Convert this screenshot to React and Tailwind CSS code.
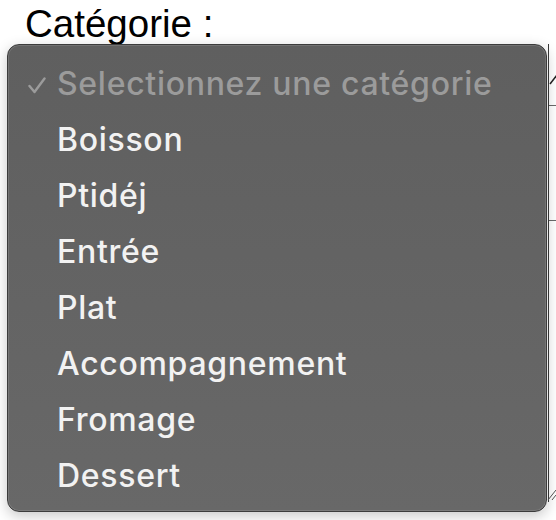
import React from "react";

const items = ["Boisson", "Ptidéj", "Entrée", "Plat", "Accompagnement", "Fromage", "Dessert"];

export default function App() {
  return (
    <div className="relative w-[556px] h-[520px] bg-white overflow-hidden">
      <div className="pl-[25px] pt-[5px] text-[38.5px] leading-[38px] text-black" style={{ fontFamily: '"Liberation Sans", Arial, sans-serif' }}>
        Catégorie :
      </div>

      {/* underlying form fragments visible at right edge */}
      <div className="absolute left-[548px] top-[44px] w-[10px] h-[458px] border-l border-[#3a3a3a] bg-white">
        <div className="h-[62px] border-b border-[#6a6a6a] relative">
          <svg className="absolute left-0 top-[28px]" width="8" height="14" viewBox="0 0 8 14">
            <path d="M1 12 L8 3" stroke="#222" strokeWidth="1.5" fill="none" />
          </svg>
        </div>
        <div className="h-[115px] border-b border-[#6a6a6a]" />
      </div>
      <svg className="absolute left-[546px] top-[486px]" width="10" height="16" viewBox="0 0 10 16">
        <path d="M2 14 L10 4" stroke="#555" strokeWidth="1" fill="none" />
        <path d="M6 14 L10 9" stroke="#555" strokeWidth="1" fill="none" />
      </svg>

      {/* dropdown menu */}
      <div
        className="absolute left-[7px] top-[44px] w-[540px] h-[468px] rounded-[12px] border border-[#3c3c3c] bg-gradient-to-b from-[#5f5f5f] to-[#686868] pt-[11px] shadow-[0_4px_14px_rgba(0,0,0,0.22),inset_0_0_0_1px_rgba(255,255,255,0.12)]"
        style={{ fontFamily: 'Inter, "Noto Sans", sans-serif' }}
      >
        <div className="relative h-[56px] pl-[49px] text-[32px] font-medium leading-[56px] text-[#9b9b9b] tracking-[0.7px]">
          <svg className="absolute left-[20px] top-[21px]" width="18" height="17" viewBox="0 0 18 17">
            <path d="M1.5 9 L6.5 15 L16.5 1.5" stroke="#9b9b9b" strokeWidth="2.4" fill="none" strokeLinecap="round" strokeLinejoin="round" />
          </svg>
          Selectionnez une catégorie
        </div>
        {items.map((t) => (
          <div key={t} className="h-[56px] pl-[49px] text-[32px] font-medium leading-[56px] text-[#f2f2f2] tracking-[0.7px]">
            {t}
          </div>
        ))}
      </div>
    </div>
  );
}
